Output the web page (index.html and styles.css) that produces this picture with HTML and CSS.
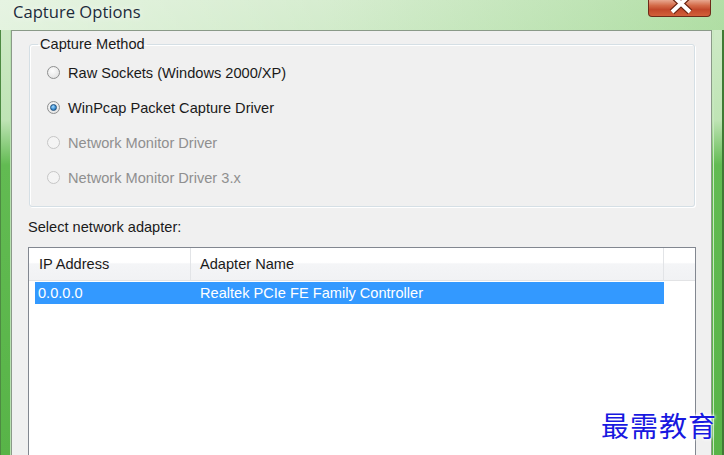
FILE: index.html
```html
<!DOCTYPE html>
<html lang="en">

<head>
  <meta charset="UTF-8">
  <title>Capture Options</title>
  <link rel="stylesheet" href="styles.css">
</head>

<body>
  <div class="window">

    <!-- Title Bar -->
    <div class="titlebar">
      <span class="title">Capture Options</span>
      <span class="close-btn">
        <svg width="63" height="17" viewBox="0 0 63 17">
          <path d="M24 -5 L42 12 M42 -5 L24 12" stroke="#6a2410" stroke-width="6.5" fill="none" />
          <path d="M24 -5 L42 12 M42 -5 L24 12" stroke="#ffffff" stroke-width="4" fill="none" />
        </svg>
      </span>
    </div>

    <div class="frame-row">
      <div class="frame-left"></div>

      <!-- Dialog Client Area -->
      <div class="client">
        <fieldset class="group">
          <legend>Capture Method</legend>
          <label class="radio-row">
            <span class="radio"></span>
            <span>Raw Sockets (Windows 2000/XP)</span>
          </label>
          <label class="radio-row">
            <span class="radio checked"></span>
            <span>WinPcap Packet Capture Driver</span>
          </label>
          <label class="radio-row disabled">
            <span class="radio"></span>
            <span>Network Monitor Driver</span>
          </label>
          <label class="radio-row disabled">
            <span class="radio"></span>
            <span>Network Monitor Driver 3.x</span>
          </label>
        </fieldset>

        <div class="adapter-label">Select network adapter:</div>

        <!-- Adapter List -->
        <div class="listview">
          <div class="list-header">
            <div class="col col-ip">IP Address</div>
            <div class="col col-name">Adapter Name</div>
            <div class="col col-rest"></div>
          </div>
          <div class="list-row selected">
            <div class="cell cell-ip">0.0.0.0</div>
            <div class="cell cell-name">Realtek PCIe FE Family Controller</div>
          </div>
        </div>
      </div>

      <div class="frame-right"></div>
    </div>

    <div class="watermark">最需教育</div>
  </div>
</body>

</html>
```

FILE: styles.css
```css
/* Page */
body {
  margin: 0;
  width: 724px;
  height: 455px;
  overflow: hidden;
  font-family: "Liberation Sans", Arial, sans-serif;
  font-size: 14.6px;
  color: #1a1a1a;
}

/* Window */
.window {
  position: relative;
  width: 724px;
  height: 455px;
  display: flex;
  flex-direction: column;
  overflow: hidden;
  background: linear-gradient(to bottom, #d2ebcb 0, #bfe4b5 120px, #62bb52 165px, #58b448 100%);
}

/* Title Bar */
.titlebar {
  height: 30px;
  flex: none;
  display: flex;
  justify-content: space-between;
  align-items: flex-start;
  background: linear-gradient(to right, rgba(255, 255, 255, 0.45), rgba(255, 255, 255, 0.1) 45%, rgba(120, 200, 100, 0.35) 100%);
}

.title {
  margin: 0 0 0 13px;
  font-family: "Open Sans", "Liberation Sans", sans-serif;
  font-size: 16.6px;
  color: #1d2b3a;
  text-shadow: 0 0 6px rgba(255, 255, 255, 0.9);
}

/* Close Button */
.close-btn {
  width: 61px;
  height: 16px;
  margin-right: 13px;
  border: 1px solid #6e2a18;
  border-top: none;
  border-radius: 0 0 4px 4px;
  overflow: hidden;
  background: linear-gradient(to bottom, #e8a890 0, #d36a48 35%, #c2482a 60%, #d2603a 100%);
}

.close-btn svg {
  display: block;
  margin-left: -1px;
}

/* Frame */
.frame-row {
  flex: 1;
  min-height: 0;
  display: flex;
}

.frame-left {
  width: 9px;
  border-left: 1px solid #4d8a42;
  border-right: 1px solid #b8e0b0;
}

.frame-right {
  width: 8px;
  border-left: 1px solid #c8e8c0;
  border-right: 2px solid #3f7a34;
  margin-left: 1px;
}

/* Client Area */
.client {
  flex: 1;
  overflow: hidden;
  background: #f0f0f0;
  border: 1px solid #8a9a88;
  border-bottom: none;
  padding-top: 5px;
}

/* Group Box */
.group {
  margin: 0 16px 0 17px;
  padding: 2px 0 11px 17px;
  border: 1px solid #d5dfe5;
  border-radius: 3px;
  box-shadow: inset 1px 1px 0 #fff, 1px 1px 0 #fff;
}

.group legend {
  margin-left: -9px;
  padding: 0 2px;
  line-height: 17px;
}

.radio-row {
  height: 35px;
  display: flex;
  align-items: center;
  gap: 8px;
}

.radio-row.disabled {
  color: #8f8f8f;
}

.radio {
  width: 11px;
  height: 11px;
  border-radius: 50%;
  border: 1px solid #8e8f8f;
  background: radial-gradient(circle at 40% 35%, #fdfdfd 0, #e6e6e6 70%, #d0d0d0 100%);
  display: flex;
  align-items: center;
  justify-content: center;
}

.radio.checked::after {
  content: "";
  width: 5px;
  height: 5px;
  border-radius: 50%;
  border: 1px solid #1d4f7c;
  background: radial-gradient(circle at 40% 35%, #a8dcff 0, #3b8fd4 55%, #1f5d96 100%);
}

.disabled .radio {
  border-color: #c6c6c6;
  background: #f4f4f4;
}

/* Adapter Label */
.adapter-label {
  margin: 12px 0 0 16px;
  line-height: 17px;
}

/* List View */
.listview {
  margin: 11px 15px 0 16px;
  height: 300px;
  border: 1px solid #828790;
  background: #fff;
}

.list-header {
  height: 32px;
  display: flex;
  border-bottom: 1px solid #e2e3e5;
  background: linear-gradient(to bottom, #fff 0, #fff 45%, #f4f5f7 50%, #f1f2f4 100%);
}

.col {
  display: flex;
  align-items: center;
  border-right: 1px solid #e2e4e7;
}

.col-ip {
  width: 151px;
  padding-left: 10px;
}

.col-name {
  width: 463px;
  padding-left: 9px;
}

.col-rest {
  flex: 1;
  border-right: none;
}

.list-row {
  height: 22px;
  margin: 1px 0 0 6px;
  width: 629px;
  display: flex;
  align-items: center;
}

.list-row.selected {
  background: #3399ff;
  color: #fff;
}

.cell-ip {
  width: 162px;
  padding-left: 3px;
}

/* Watermark */
.watermark {
  position: absolute;
  left: 601px;
  top: 405px;
  font-family: "Noto Sans CJK SC", sans-serif;
  font-size: 28px;
  letter-spacing: 1px;
  color: #1818e0;
  text-shadow: 0 0 2px #fff, 0 0 3px #fff, 0 0 4px #fff;
}
```
